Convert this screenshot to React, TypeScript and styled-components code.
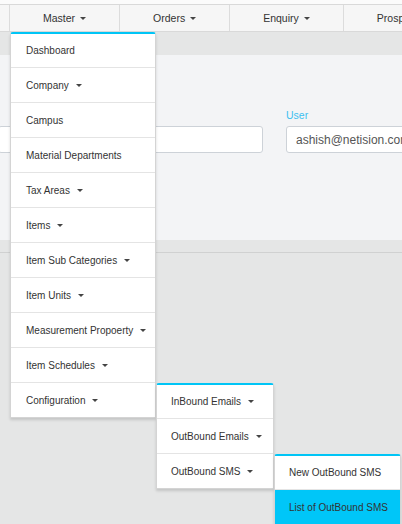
import React from 'react';
import styled, {createGlobalStyle} from 'styled-components';

type MenuItem = {
  label: string;
  caret?: boolean;
  active?: boolean;
  children?: MenuItem[];
};

const masterMenu: MenuItem[] = [
  {label: 'Dashboard'},
  {label: 'Company', caret: true},
  {label: 'Campus'},
  {label: 'Material Departments'},
  {label: 'Tax Areas', caret: true},
  {label: 'Items', caret: true},
  {label: 'Item Sub Categories', caret: true},
  {label: 'Item Units', caret: true},
  {label: 'Measurement Propoerty', caret: true},
  {label: 'Item Schedules', caret: true},
  {
    label: 'Configuration',
    caret: true,
    children: [
      {label: 'InBound Emails', caret: true},
      {label: 'OutBound Emails', caret: true},
      {
        label: 'OutBound SMS',
        caret: true,
        children: [
          {label: 'New OutBound SMS'},
          {label: 'List of OutBound SMS', active: true},
        ],
      },
    ],
  },
];

const levelWidths = [146, 118, 127];
const levelPadding = [15, 14, 14];

const GlobalStyle = createGlobalStyle`
  html, body {
    margin: 0;
    padding: 0;
  }
  body {
    background: #e5e6e6;
    font-family: "Liberation Sans", Arial, sans-serif;
    overflow: hidden;
  }
`;

const Page = styled.div`
  width: 402px;
  height: 524px;
  overflow: hidden;
  background: #e5e6e6;
`;

const TopStrip = styled.div`
  height: 4px;
  background: #fbfbfb;
`;

const NavBar = styled.nav`
  display: flex;
  height: 26px;
  background: #f6f6f6;
  border-top: 1px solid #d9d9d9;
  border-bottom: 1px solid #d9d9d9;
  white-space: nowrap;
`;

const NavSpacer = styled.div`
  width: 9px;
  flex-shrink: 0;
`;

const NavCell = styled.div`
  position: relative;
  display: flex;
  align-items: center;
  flex-shrink: 0;
  padding: 0 33px;
  border-left: 1px solid #dcdcdc;
  font-size: 10.5px;
  color: #333;
  z-index: 5;
`;

const Caret = styled.span<{$gap: number}>`
  display: inline-block;
  width: 0;
  height: 0;
  margin-left: ${p => p.$gap}px;
  border-top: 3px solid #444;
  border-left: 3px solid transparent;
  border-right: 3px solid transparent;
`;

const Band = styled.div`
  height: 23px;
`;

const Panel = styled.section`
  box-sizing: border-box;
  height: 185px;
  padding-top: 54px;
  background: #f3f4f6;
`;

const FormRow = styled.div`
  display: grid;
  grid-template-columns: 265px 265px;
  column-gap: 23px;
  margin-left: -2px;
`;

const Field = styled.div`
  display: flex;
  flex-direction: column;
`;

const Label = styled.label`
  height: 13px;
  line-height: 13px;
  margin-bottom: 4px;
  font-size: 10.5px;
  color: #3dbff0;
`;

const Input = styled.input`
  box-sizing: border-box;
  height: 27px;
  padding: 0 9px;
  border: 1px solid #cdd2d8;
  border-radius: 3px;
  background: #fff;
  font-family: "Liberation Sans", Arial, sans-serif;
  font-size: 12px;
  color: #555;
  outline: none;
`;

const Divider = styled.div`
  margin-top: 12px;
  border-top: 1px solid #d0d1d1;
`;

const Menu = styled.ul<{$width: number; $nested: boolean}>`
  position: absolute;
  top: ${p => (p.$nested ? '0' : 'calc(100% + 1px)')};
  left: ${p => (p.$nested ? 'calc(100% + 1px)' : '0')};
  box-sizing: border-box;
  width: ${p => p.$width}px;
  margin: 0;
  padding: 0;
  list-style: none;
  background: #fff;
  border: 1px solid #d4d4d4;
  border-top: 2px solid #00c5f6;
  border-radius: 3px 3px 0 0;
  box-shadow: 0 2px 3px rgba(0, 0, 0, 0.15);
  z-index: 10;
`;

const Entry = styled.li<{$pad: number; $active?: boolean}>`
  position: relative;
  display: flex;
  align-items: center;
  height: 34px;
  padding: 0 ${p => p.$pad}px;
  border-bottom: 1px solid #e4e4e4;
  background: ${p => (p.$active ? '#00c6f8' : '#fff')};
  font-size: 10px;
  color: #333;
  white-space: nowrap;
  &:first-child {
    height: 33px;
  }
  &:last-child {
    border-bottom: none;
  }
`;

const DropMenu: React.FunctionComponent<{items: MenuItem[]; level: number}> = ({items, level}) => (
  <Menu $width={levelWidths[level]} $nested={level > 0}>
    {items.map(item => (
      <Entry key={item.label} $pad={levelPadding[level]} $active={item.active}>
        {item.label}
        {item.caret && <Caret $gap={7} />}
        {item.children && <DropMenu items={item.children} level={level + 1} />}
      </Entry>
    ))}
  </Menu>
);

const App: React.FunctionComponent = () => {
  return (
    <Page>
      <GlobalStyle />
      <TopStrip />
      <NavBar>
        <NavSpacer />
        <NavCell>
          Master
          <Caret $gap={5} />
          <DropMenu items={masterMenu} level={0} />
        </NavCell>
        <NavCell>
          Orders
          <Caret $gap={5} />
        </NavCell>
        <NavCell>
          Enquiry
          <Caret $gap={5} />
        </NavCell>
        <NavCell>
          Prospects
          <Caret $gap={5} />
        </NavCell>
      </NavBar>
      <Band />
      <Panel>
        <FormRow>
          <Field>
            <Label />
            <Input readOnly defaultValue="" />
          </Field>
          <Field>
            <Label>User</Label>
            <Input readOnly defaultValue="ashish@netision.com" />
          </Field>
        </FormRow>
      </Panel>
      <Divider />
    </Page>
  );
};

export default App;
